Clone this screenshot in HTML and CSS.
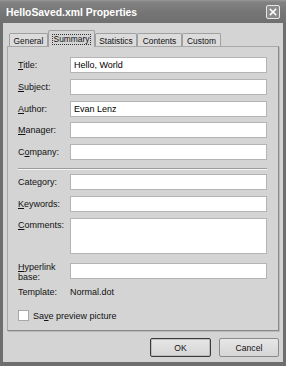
FILE: index.html
```html
<!DOCTYPE html>
<html>
<head>
<meta charset="utf-8">
<link rel="stylesheet" href="styles.css">
</head>
<body>
<div class="window">
  <div class="titlebar">
    <span class="title">HelloSaved.xml Properties</span>
    <span class="close"><svg width="14" height="14" viewBox="0 0 14 14"><path d="M4 4 L10 10 M10 4 L4 10" stroke="#fff" stroke-width="1.8" stroke-linecap="square"/></svg></span>
  </div>
  <div class="client">
    <div class="tabs">
      <div class="tab t-general">General</div>
      <div class="tab active t-summary"><span class="focus">Summary</span></div>
      <div class="tab t-stats">Statistics</div>
      <div class="tab t-contents">Contents</div>
      <div class="tab t-custom">Custom</div>
    </div>
    <div class="panel">
      <div class="group g1">
        <div class="row"><span class="lbl"><u>T</u>itle:</span><span class="inp">Hello, World</span></div>
        <div class="row"><span class="lbl"><u>S</u>ubject:</span><span class="inp"></span></div>
        <div class="row"><span class="lbl"><u>A</u>uthor:</span><span class="inp">Evan Lenz</span></div>
        <div class="row"><span class="lbl"><u>M</u>anager:</span><span class="inp"></span></div>
        <div class="row"><span class="lbl">C<u>o</u>mpany:</span><span class="inp"></span></div>
      </div>
      <div class="sep"></div>
      <div class="group g2">
        <div class="row"><span class="lbl">Cate<u>g</u>ory:</span><span class="inp"></span></div>
        <div class="row"><span class="lbl"><u>K</u>eywords:</span><span class="inp"></span></div>
        <div class="row top"><span class="lbl pad"><u>C</u>omments:</span><span class="inp area"></span></div>
        <div class="row top link"><span class="lbl two"><u>H</u>yperlink<br>base:</span><span class="inp"></span></div>
        <div class="row tmpl"><span class="lbl">Template:</span><span class="val">Normal.dot</span></div>
      </div>
      <div class="check"><span class="box"></span><span>Sa<u>v</u>e preview picture</span></div>
    </div>
    <div class="buttons">
      <span class="btn default">OK</span>
      <span class="btn">Cancel</span>
    </div>
  </div>
</div>
</body>
</html>
```
FILE: styles.css
```css
html, body { margin: 0; padding: 0; background: #d4d4d4; }
body { font-family: "Liberation Sans", Arial, sans-serif; font-size: 9px; color: #111; }
u { text-decoration: underline; text-underline-offset: 1px; }

.window {
  width: 286px; height: 366px; box-sizing: border-box;
  display: flex; flex-direction: column;
  background: #6e6e6e;
}
.titlebar {
  height: 23px; flex: none;
  display: flex; align-items: center; justify-content: space-between;
  padding: 0 6px 0 6px;
  background: linear-gradient(#9a9a9a 0, #828282 2px, #767676 12px, #6f6f6f 23px);
}
.title { color: #fff; font-weight: bold; font-size: 10.4px; padding-top: 2px; }
.close {
  width: 14px; height: 14px; box-sizing: border-box;
  border: 1px solid #e8e8e8; border-radius: 2px;
  background: #8c8c8c; display: flex; align-items: center; justify-content: center;
  margin-top: 1px;
}
.close svg { width: 12px; height: 12px; }

.client {
  flex: 1; margin: 0 3px 4px 3px; background: #d4d4d4;
  display: flex; flex-direction: column;
}
.tabs {
  display: flex; align-items: flex-end; height: 16px;
  margin-top: 7px; padding-left: 6px; position: relative; z-index: 1;
}
.tab {
  height: 13px; box-sizing: border-box;
  border: 1px solid #a0a0a0; border-bottom: none; border-radius: 2px 2px 0 0;
  background: #dcdcdc;
  display: flex; align-items: center; justify-content: center;
  font-size: 8.4px; padding-top: 1px;
}
.t-general { width: 39px; }
.t-summary { width: 47px; }
.t-stats { width: 42px; }
.t-contents { width: 45px; }
.t-custom { width: 39px; }
.tab.active {
  height: 17px; background: #d4d4d4; border-color: #a0a0a0;
  margin-bottom: -1px; padding-top: 0;
}
.focus { border: 1px dotted #333; padding: 0 1px; line-height: 9px; }

.panel {
  width: 272px; height: 285px; box-sizing: border-box;
  margin-left: 4px;
  border: 1px solid #a8a8a8; border-right-color: #8a8a8a; border-bottom-color: #8a8a8a;
  box-shadow: 1px 1px 0 #b8b8b8;
  padding: 10px 0 0 10px;
  display: flex; flex-direction: column;
}
.group { display: flex; flex-direction: column; }
.g1 { gap: 5.75px; }
.g2 { gap: 6px; margin-top: 4px; }
.row { display: flex; align-items: center; }
.row.top { align-items: flex-start; }
.lbl { width: 52px; flex: none; }
.lbl.pad { padding-top: 2px; }
.lbl.two { line-height: 9.5px; }
.inp {
  width: 197px; height: 16px; box-sizing: border-box;
  background: #fff; border: 1px solid #b4b4b4;
  padding: 0 0 0 3px; line-height: 14px; color: #000;
}
.inp.area { height: 36px; }
.row.link { margin-top: 3px; }
.row.tmpl { margin-top: -2px; line-height: 12px; }
.val { color: #111; }
.sep {
  width: 249px; height: 0; margin-top: 8px;
  border-top: 1px solid #9c9c9c; border-bottom: 1px solid #f4f4f4;
}
.check { display: flex; align-items: center; margin-top: 12px; }
.box {
  width: 11px; height: 11px; box-sizing: border-box;
  background: #fff; border: 1px solid #a8a8a8; margin-right: 4px;
}

.buttons {
  display: flex; justify-content: flex-end; gap: 8px;
  padding-right: 4px; margin-top: 7px;
}
.btn {
  height: 19px; box-sizing: border-box;
  display: flex; align-items: center; justify-content: center;
  border: 1px solid #8a8a8a; border-radius: 2px;
  background: linear-gradient(#e6e6e6, #d6d6d6);
  font-size: 8.6px; color: #111;
  width: 60px;
}
.btn.default { width: 61px; border-color: #3a3a3a; box-shadow: inset 0 0 0 1px #bdbdbd; }
```
